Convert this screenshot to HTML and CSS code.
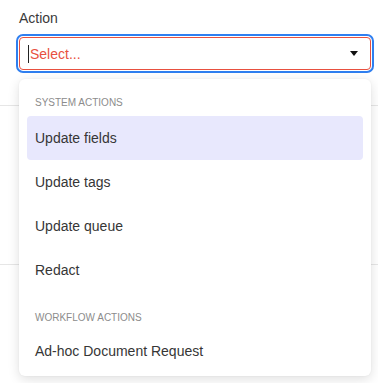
FILE: index.html
```html
<!DOCTYPE html>
<html>
<head>
<meta charset="utf-8">
<link rel="stylesheet" href="styles.css">
</head>
<body>
<div class="page">
  <div class="field">
    <div class="label">Action</div>
    <div class="select">
      <span class="cursor"></span>
      <span class="placeholder">Select...</span>
      <svg class="caret" width="8" height="5" viewBox="0 0 8 5"><path d="M0 0h8L4 5z" fill="#111"/></svg>
    </div>
    <div class="menu">
      <div class="group">
        <div class="group-title">System actions</div>
        <div class="item active">Update fields</div>
        <div class="item">Update tags</div>
        <div class="item">Update queue</div>
        <div class="item">Redact</div>
      </div>
      <div class="group">
        <div class="group-title">Workflow actions</div>
        <div class="item">Ad-hoc Document Request</div>
      </div>
    </div>
  </div>
  <div class="bg-row first"></div>
  <div class="bg-row second"></div>
</div>
</body>
</html>
```
FILE: styles.css
```css
* { box-sizing: border-box; }
html, body { margin: 0; padding: 0; background: #fff; }
body {
  font-family: "Liberation Sans", Arial, sans-serif;
  color: #333;
  width: 378px;
  height: 383px;
  overflow: hidden;
}
.page { position: relative; padding: 10px 7px 0 19px; }
.field { position: relative; z-index: 2; }
.label {
  font-size: 14px;
  line-height: 17px;
  color: #3a3a3a;
  height: 27px;
}
.select {
  height: 33px;
  width: 352px;
  border: 1px solid #e8503f;
  border-radius: 4px;
  outline: 2px solid #2f7ff0;
  outline-offset: 1px;
  display: flex;
  align-items: center;
  padding: 0 12px 0 8px;
  background: #fff;
}
.cursor {
  width: 1px;
  height: 18px;
  background: #222;
  margin-right: 1px;
}
.placeholder {
  color: #e8503f;
  font-size: 14px;
  flex: 1;
}
.caret { display: block; }
.menu {
  position: absolute;
  left: 0;
  top: 69px;
  width: 352px;
  height: 297px;
  overflow: hidden;
  background: #fff;
  border-radius: 6px;
  box-shadow: 0 3px 12px rgba(0,0,0,0.13), 0 0 2px rgba(0,0,0,0.05);
  padding: 8px 8px 0;
}
.group + .group { margin-top: 8px; }
.group-title {
  text-transform: uppercase;
  font-size: 10px;
  color: #8c8c8c;
  height: 29px;
  padding: 10px 8px 0;
  line-height: 12px;
}
.group + .group .group-title { padding-top: 12px; }
.item {
  height: 44px;
  display: flex;
  align-items: center;
  padding: 0 8px;
  font-size: 14px;
  color: #363636;
  border-radius: 4px;
}
.item.active { background: #e8e8fd; }
.bg-row {
  position: absolute;
  left: 0;
  right: 0;
  height: 1px;
  background: #e6e6e6;
  z-index: 1;
}
.bg-row.first { top: 105px; }
.bg-row.second { top: 264px; }
```
